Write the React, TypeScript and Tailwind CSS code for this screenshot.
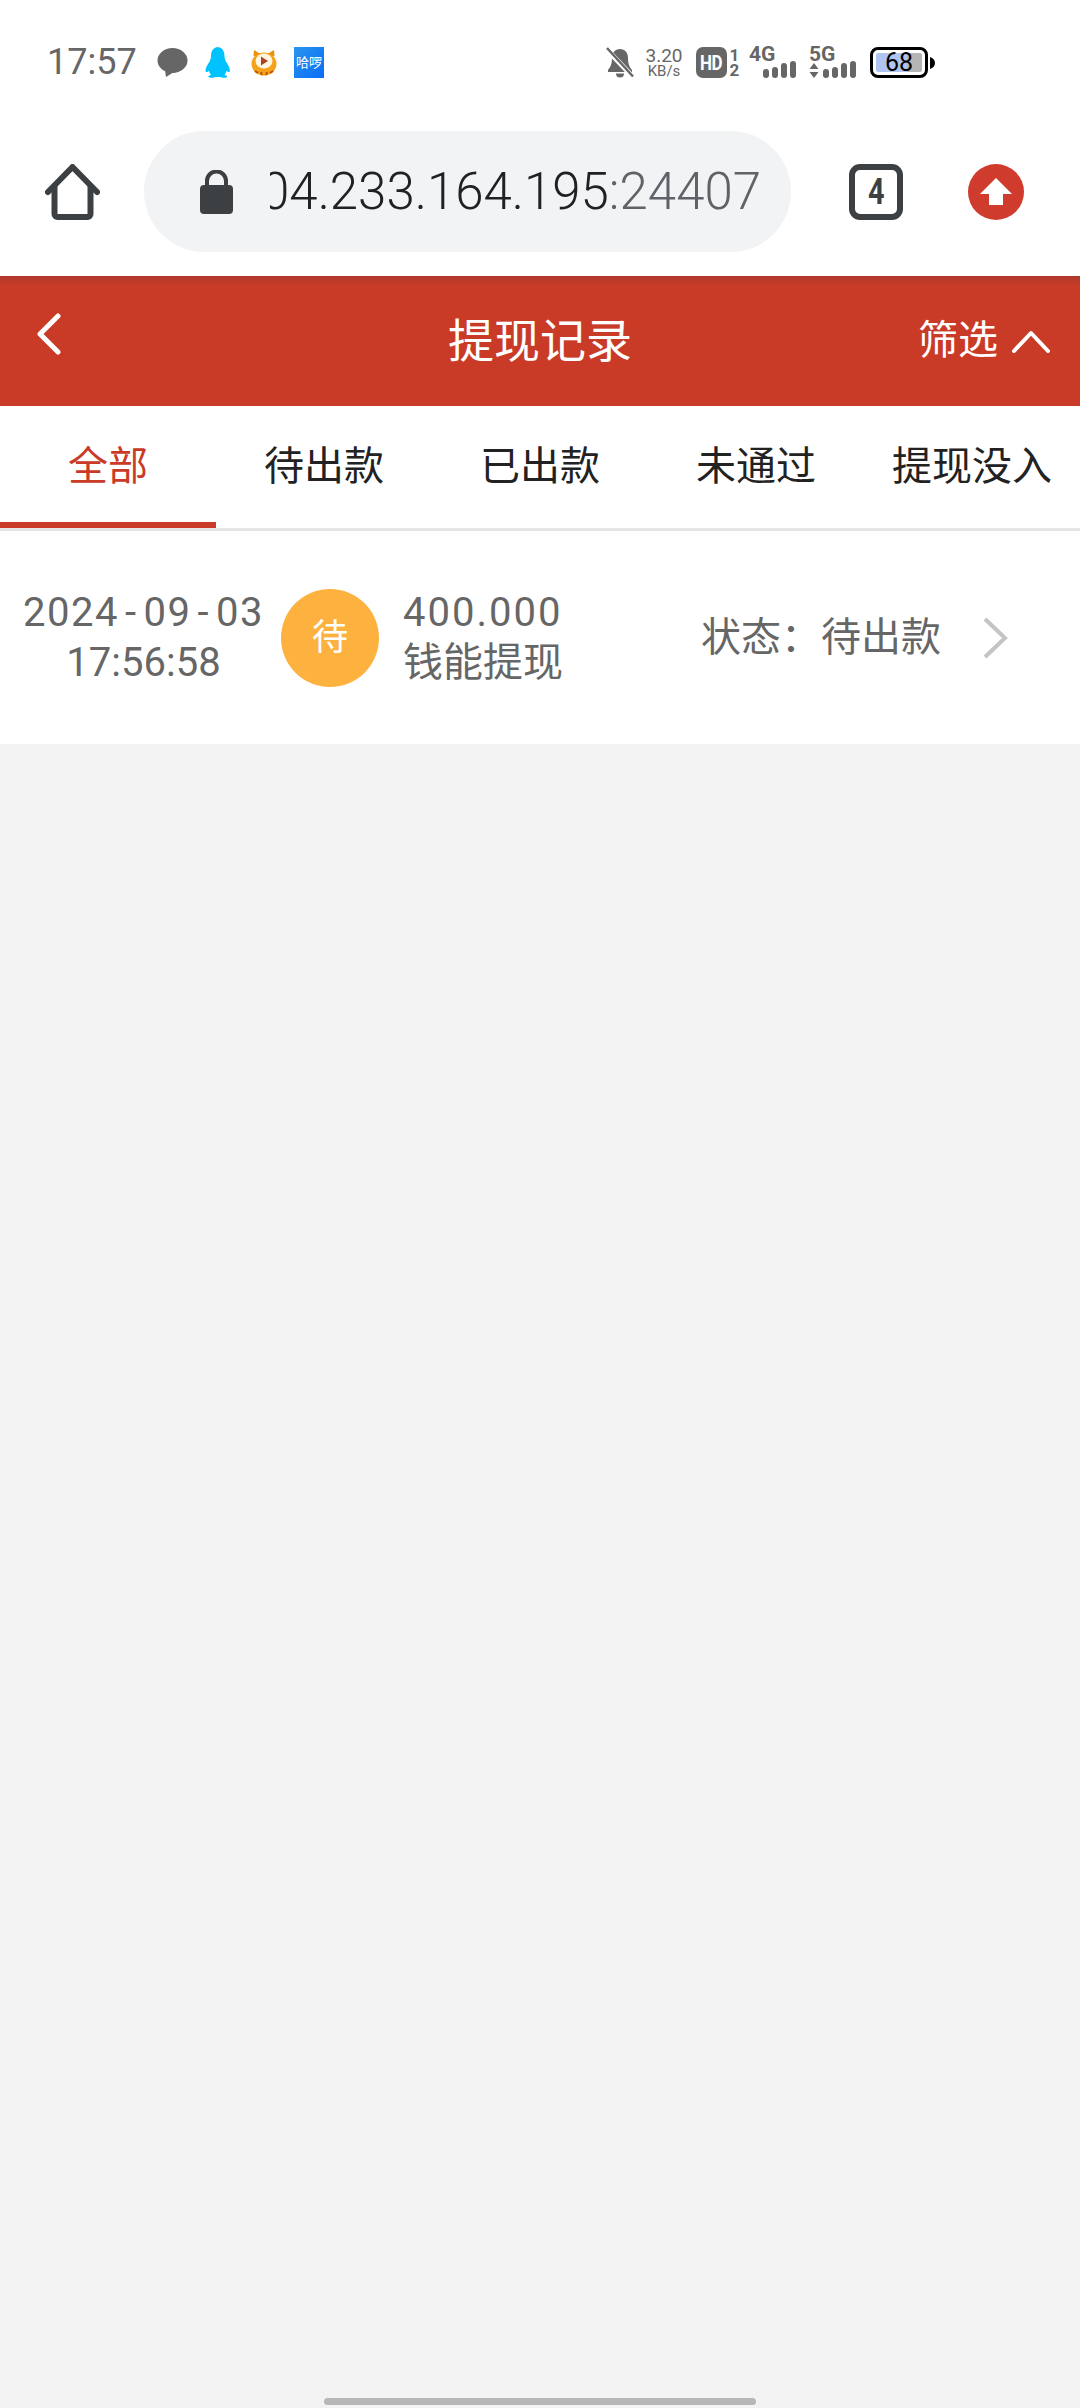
const tabs = ["全部", "待出款", "已出款", "未通过", "提现没入"];

function SignalBars() {
  return (
    <div className="flex items-end gap-[3px]">
      <span className="h-[9px] w-[6px] rounded-[3px] bg-[#666]" />
      <span className="h-[11px] w-[6px] rounded-[3px] bg-[#666]" />
      <span className="h-[15px] w-[6px] rounded-[3px] bg-[#666]" />
      <span className="h-[17px] w-[6px] rounded-[3px] bg-[#666]" />
    </div>
  );
}

function StatusBar() {
  return (
    <div className="flex h-[107px] items-start pt-[47px] pl-[47px] text-[#666]">
      <span className="h-[31px] w-[110px] shrink-0 text-[36px] leading-[31px]">17:57</span>
      <div className="flex h-[31px] items-center">
        <svg width="31" height="31" viewBox="0 0 31 31" fill="#666">
          <ellipse cx="15.5" cy="13.5" rx="15" ry="12.5" />
          <path d="M8 23l1 7 8-5z" />
        </svg>
        <svg className="ml-[17px]" width="27" height="31" viewBox="0 0 27 31" fill="#00c2ff">
          <path d="M13.5 0C8 0 6 4.500 6 9c0 3-1 5-3 8-2 3-3 7-2 8 1 .5 2-.5 3-1 .5 2 1.500 3 2 4-2 .5-3 1-2.500 2 .5 1 5 1 7 0 2 0 3 0 4.500 0 2 1 6.500 1 7 0 .5-1-.5-1.500-2.500-2 .5-1 1.500-2 2-4 1 .5 2 1.500 3 1 1-1 0-5-2-8-2-3-3-5-3-8 0-4.500-2-9-7.500-9z" />
        </svg>
        <svg className="ml-[19px]" width="26" height="28" viewBox="0 0 26 28">
          <path d="M3 1l5 3h10l5-3 .5 6H2.500z" fill="#e8900f" />
          <ellipse cx="13" cy="15" rx="12.500" ry="11.500" fill="#f6a21c" />
          <ellipse cx="13" cy="12" rx="8.500" ry="7.500" fill="#fff6e0" />
          <path d="M10 7.500l7 4.500-7 4.500z" fill="#a8442a" />
          <path d="M4 22l3 2M10 23l1 3M16 23l-1 3M22 22l-3 2" stroke="#b8560f" strokeWidth="2" />
        </svg>
        <div className="ml-[17px] flex h-[31px] w-[30px] items-center justify-center overflow-hidden bg-[linear-gradient(135deg,#2a96ee,#0a6cf5)] text-[13px] leading-none whitespace-nowrap text-white">
          哈啰
        </div>
      </div>
      <div className="ml-[282px] flex h-[31px] items-center">
        <svg width="28" height="31" viewBox="0 0 28 31" fill="#666">
          <path d="M14 2c-5 0-8 3.500-8 9 0 6-1.500 9-4 12v2h24v-2c-2.500-3-4-6-4-12 0-5.500-3-9-8-9z" />
          <path d="M10 26.500a4 4 0 0 0 8 0z" />
          <path d="M0 1.500L27 30" stroke="#fff" strokeWidth="5" />
          <path d="M1 1l26 28.500" stroke="#666" strokeWidth="2.500" />
        </svg>
        <div className="ml-[11px] flex w-[38px] flex-col items-center leading-none">
          <span className="text-[19px] leading-[18px]">3.20</span>
          <span className="text-[15px] leading-[13px]">KB/s</span>
        </div>
        <div className="ml-[13px] flex h-[31px] w-[31px] items-center justify-center rounded-[7px] bg-[#666] text-[20px] leading-none font-bold tracking-[-.5px] text-white">
          <span className="scale-x-[.85]">HD</span>
        </div>
        <div className="ml-[2px] flex w-[11px] flex-col items-center text-[17px] leading-[15px] font-bold">
          <span>1</span>
          <span>2</span>
        </div>
        <div className="relative ml-[9px] h-[31px] w-[47px]">
          <span className="absolute top-0 left-0 text-[21px] leading-[14px] font-bold">4G</span>
          <div className="absolute right-0 bottom-0">
            <SignalBars />
          </div>
        </div>
        <div className="relative ml-[13px] h-[31px] w-[47px]">
          <span className="absolute top-0 left-0 text-[21px] leading-[14px] font-bold">5G</span>
          <svg className="absolute bottom-0 left-0" width="10" height="15" viewBox="0 0 10 15" fill="#666">
            <path d="M5 0l4.500 6H.500zM5 15L.500 9h9z" />
          </svg>
          <div className="absolute right-0 bottom-0">
            <SignalBars />
          </div>
        </div>
        <div className="ml-[14px] flex h-[31px] w-[58px] items-center rounded-[8px] border-[3px] border-black p-[3px]">
          <div className="relative flex h-full w-full items-center justify-center rounded-[2px] bg-[linear-gradient(90deg,#b0c5f2_68%,#b5b5b5_68%)] text-[25px] leading-none text-black">
            68
          </div>
        </div>
        <svg className="ml-[2px]" width="5" height="12" viewBox="0 0 5 12" fill="#000">
          <path d="M0 0c3 1 5 3 5 6s-2 5-5 6z" />
        </svg>
      </div>
    </div>
  );
}

function BrowserBar() {
  return (
    <div className="flex h-[169px] items-start pt-[24px] text-[#3c4043]">
      <div className="flex h-[121px] w-[144px] shrink-0 items-center pl-[45px]">
        <svg width="55" height="56" viewBox="0 0 55 56" fill="none" stroke="#3c4043" strokeWidth="6" strokeLinecap="round" strokeLinejoin="round">
          <path d="M3 28L27.500 3 52 28" />
          <path d="M9.500 23v27a3 3 0 0 0 3 3h30a3 3 0 0 0 3-3V23" />
        </svg>
      </div>
      <div className="flex h-[121px] w-[647px] shrink-0 items-center rounded-full bg-[#f1f3f4] pl-[56px]">
        <svg width="33" height="44" viewBox="0 0 33 44" fill="#3c4043">
          <path d="M7 17v-6a9.500 9.500 0 0 1 19 0v6" fill="none" stroke="#3c4043" strokeWidth="4" />
          <rect x="0" y="15" width="33" height="29" rx="4" />
        </svg>
        <div className="ml-[37px] flex w-[491px] justify-end overflow-hidden text-[51px] leading-[60px] font-light whitespace-nowrap text-[#202124]">
          <span className="shrink-0">
            104.233.164.195<span className="text-[#5f6368]">:24407</span>
          </span>
        </div>
      </div>
      <div className="flex h-[121px] items-center pl-[58px]">
        <div className="flex h-[56px] w-[54px] items-center justify-center rounded-[11px] border-[6px] border-[#3c4043] text-[36px] leading-none font-bold">
          <span className="scale-x-[.8]">4</span>
        </div>
      </div>
      <div className="flex h-[121px] items-center pl-[65px]">
        <svg width="56" height="56" viewBox="0 0 56 56">
          <circle cx="28" cy="28" r="28" fill="#cf3b2d" />
          <path d="M28 14L44 30H35V41H21V30H12z" fill="#fff" />
        </svg>
      </div>
    </div>
  );
}

function Header() {
  return (
    <div className="flex h-[130px] items-center bg-[linear-gradient(#ad3a2b,#c93b27_10px)] text-white">
      <div className="w-[350px] pb-[14px] pl-[36px]">
        <svg className="block" width="26" height="42" viewBox="0 0 26 42" fill="none" stroke="#fff" strokeWidth="5" strokeLinecap="round" strokeLinejoin="round">
          <path d="M22 3L4 21l18 18" />
        </svg>
      </div>
      <h1 className="w-[380px] text-center text-[46px] leading-none font-normal">提现记录</h1>
      <div className="flex flex-1 items-center pl-[188px]">
        <span className="text-[40px] leading-none whitespace-nowrap">筛选</span>
        <svg className="ml-[14px] shrink-0" width="38" height="24" viewBox="0 0 38 24" fill="none" stroke="#fff" strokeWidth="4" strokeLinecap="round" strokeLinejoin="round">
          <path d="M2 22L19 4l17 18" />
        </svg>
      </div>
    </div>
  );
}

function Tabs() {
  return (
    <div className="grid h-[125px] grid-cols-5 border-b-[3px] border-[#e5e5e5] bg-white">
      {tabs.map((tab, i) => (
        <div
          key={tab}
          className={
            i === 0
              ? "flex items-center justify-center border-b-[6px] border-[#c93b27] pt-[6px] text-[40px] whitespace-nowrap text-[#c93b27]"
              : "flex items-center justify-center border-b-[6px] border-transparent pt-[6px] text-[40px] whitespace-nowrap text-[#222]"
          }
        >
          {tab}
        </div>
      ))}
    </div>
  );
}

function RecordRow() {
  return (
    <div className="flex h-[213px] items-center bg-white text-[#666]">
      <div className="w-[281px] shrink-0 pl-[6px] text-center text-[40px] leading-[50px]">
        <div className="tracking-[1.5px] whitespace-nowrap">
          2024<span className="mx-[6px]">-</span>09<span className="mx-[6px]">-</span>03
        </div>
        <div>17:56:58</div>
      </div>
      <div className="flex h-[98px] w-[98px] shrink-0 items-center justify-center rounded-full bg-[#fdb240] text-[36px] text-white">
        待
      </div>
      <div className="ml-[24px] w-[298px] shrink-0 text-[40px] leading-[50px]">
        <div className="tracking-[2px]">400.000</div>
        <div>钱能提现</div>
      </div>
      <span className="text-[40px] whitespace-nowrap">状态：待出款</span>
      <svg className="ml-[41px] shrink-0" width="26" height="42" viewBox="0 0 26 42" fill="none" stroke="#c4c4c4" strokeWidth="4">
        <path d="M3 2l20 19L3 40" />
      </svg>
    </div>
  );
}

export default function App() {
  return (
    <div className="flex h-[2408px] w-[1080px] flex-col overflow-hidden bg-white font-[Roboto,'Noto_Sans_CJK_SC',sans-serif]">
      <StatusBar />
      <BrowserBar />
      <Header />
      <Tabs />
      <RecordRow />
      <div className="flex flex-1 items-end justify-center bg-[#f3f3f3] pb-[3px]">
        <div className="h-[7px] w-[432px] rounded-full bg-[#b7b7b7]" />
      </div>
    </div>
  );
}
